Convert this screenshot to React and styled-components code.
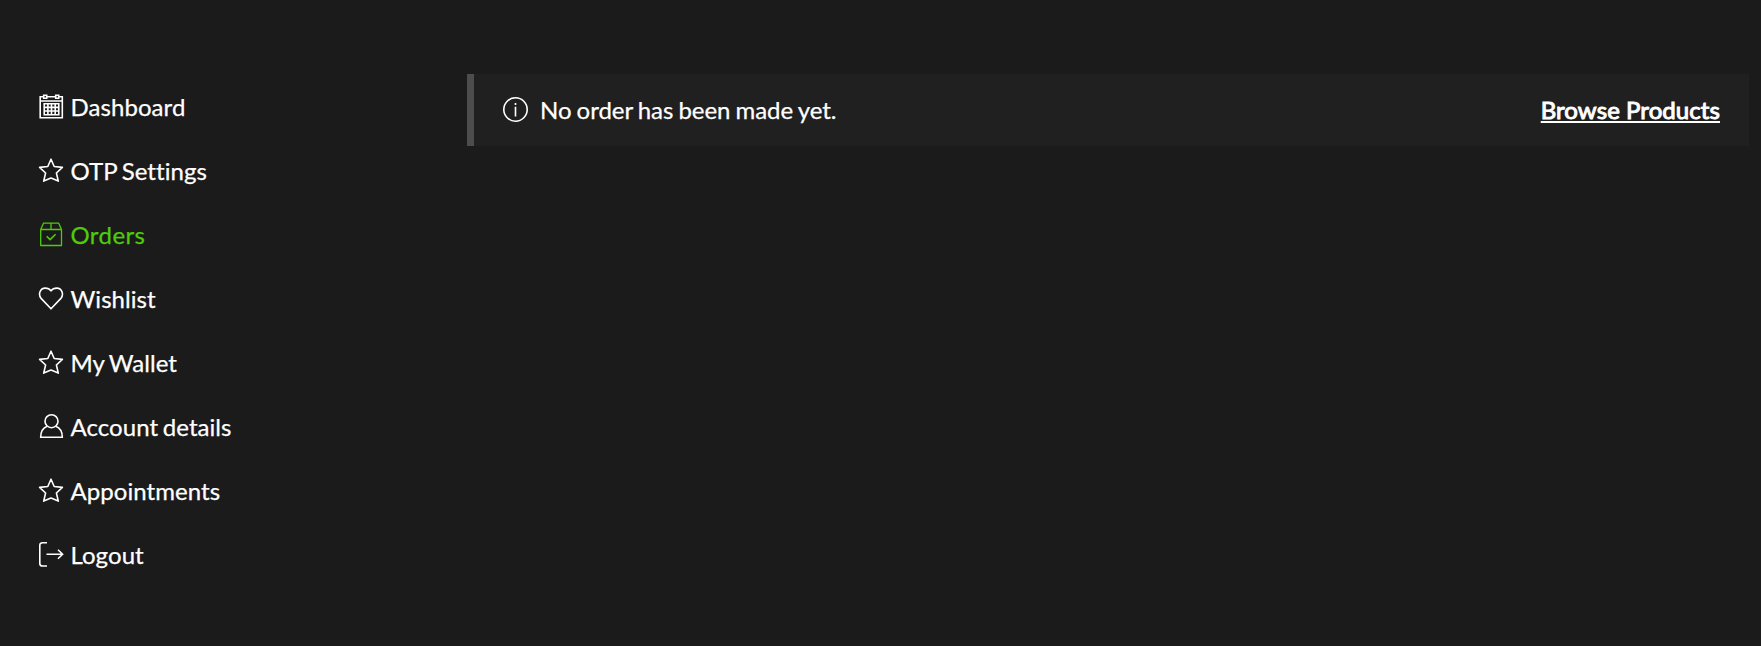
import React from "react";
import styled, { createGlobalStyle } from "styled-components";

const GlobalStyle = createGlobalStyle`
  body {
    margin: 0;
    background: #1b1b1b;
    color: #ffffff;
    font-family: Lato, "Liberation Sans", sans-serif;
    font-size: 24px;
    line-height: 40px;
    font-variant-ligatures: none;
    -webkit-text-stroke: 0.25px currentColor;
  }
`;

const Page = styled.div`
  display: flex;
  min-height: 646px;
  box-sizing: border-box;
  padding: 74px 12px 0 27px;
`;

const Sidebar = styled.nav`
  width: 440px;
  flex-shrink: 0;
`;

const Menu = styled.ul`
  list-style: none;
  margin: 0;
  padding: 0;
`;

const MenuLink = styled.a`
  display: flex;
  align-items: center;
  height: 64px;
  padding-left: 11px;
  color: ${(props) => (props.$active ? "#4fcb0c" : "#ffffff")};
  letter-spacing: ${(props) => (props.$active ? "0.4px" : "0.06px")};
  word-spacing: -1.6px;
  text-decoration: none;
`;

const MenuLabel = styled.span`
  margin: 2px 0 0 6.5px;
`;

const Icon = styled.svg`
  width: 26px;
  height: 26px;
  flex-shrink: 0;
  fill: none;
  stroke: currentColor;
  stroke-width: 1.6;
`;

const Content = styled.main`
  flex: 1;
`;

const Notice = styled.div`
  display: flex;
  align-items: center;
  height: 72px;
  box-sizing: border-box;
  padding: 0 29px 0 28px;
  background: #202020;
  border-left: 7px solid #4d4d4d;
`;

const NoticeText = styled.span`
  flex: 1;
  margin-left: 12px;
  letter-spacing: -0.04px;
  word-spacing: -1px;
`;

const NoticeLink = styled.a`
  color: #ffffff;
  letter-spacing: 0.07px;
  -webkit-text-stroke: 1px #ffffff;
  text-decoration: underline;
  text-decoration-thickness: 2px;
  text-underline-offset: 2px;
  text-decoration-skip-ink: none;
`;

const CalendarIcon = () => (
  <Icon viewBox="0 0 26 26">
    <path d="M5.5 3.7H2.2v21.1h22.1V3.7H21M9 3.7h8.5M2.2 8h22.1" />
    <path d="M5.7 2.2h3v3h-3zM17.7 2.2h3v3h-3z" />
    <path d="M6.2 10.7h14.6v11H6.2zM6.2 14.4h14.6M6.2 18h14.6M9.9 10.7v11M13.5 10.7v11M17.2 10.7v11" />
  </Icon>
);

const StarIcon = () => (
  <Icon viewBox="0 0 26 26" strokeLinejoin="round">
    <path d="M13 2.2l3.2 7.3 8.2.9-6 5.6 1.9 8.1L13 21.1l-7.3 3 1.9-8.1-6-5.6 8.2-.9z" />
  </Icon>
);

const OrdersIcon = () => (
  <Icon viewBox="0 0 26 26" strokeLinejoin="round">
    <path d="M2.7 8.5h20.8v16H2.7zM2.7 8.5l2.8-6.3h15.2l2.8 6.3M13 2.2v6.3" strokeWidth="1.3" />
    <path d="M8.7 15.2l3.4 3.4 5.5-5.4" />
  </Icon>
);

const HeartIcon = () => (
  <Icon viewBox="0 0 26 26" strokeLinejoin="round">
    <path d="M13 23.8L3.1 13.4C-.1 9.6 2 3.1 7.2 3.1c2.8 0 4.7 1.2 5.8 2.7 1.1-1.5 3-2.7 5.8-2.7 5.2 0 7.3 6.5 4.1 10.3z" />
  </Icon>
);

const UserIcon = () => (
  <Icon viewBox="0 0 26 26">
    <circle cx="13.5" cy="8.2" r="6.5" />
    <path d="M9.2 13.2c-4.2 1.6-6.5 5-6.5 11h21.6c0-6-2.3-9.4-6.5-11" />
  </Icon>
);

const LogoutIcon = () => (
  <Icon viewBox="0 0 26 26">
    <path d="M9 1.8H4.6c-1.8 0-2.8.8-2.8 2.6v18c0 1.8 1 2.6 2.8 2.6H9" />
    <path d="M8.5 13.3h16M20 8.8l4.6 4.5-4.6 4.5" />
  </Icon>
);

const InfoIcon = () => (
  <Icon viewBox="0 0 26 26">
    <circle cx="13.5" cy="12.5" r="11.7" />
    <path d="M13.5 9.7v9.8M13.5 6v2" />
  </Icon>
);

const items = [
  { label: "Dashboard", icon: CalendarIcon },
  { label: "OTP Settings", icon: StarIcon },
  { label: "Orders", icon: OrdersIcon, active: true },
  { label: "Wishlist", icon: HeartIcon },
  { label: "My Wallet", icon: StarIcon },
  { label: "Account details", icon: UserIcon },
  { label: "Appointments", icon: StarIcon },
  { label: "Logout", icon: LogoutIcon },
];

export default function App() {
  return (
    <>
      <GlobalStyle />
      <Page>
        <Sidebar>
          <Menu>
            {items.map(({ label, icon: ItemIcon, active }) => (
              <li key={label}>
                <MenuLink href="#" $active={active}>
                  <ItemIcon />
                  <MenuLabel>{label}</MenuLabel>
                </MenuLink>
              </li>
            ))}
          </Menu>
        </Sidebar>
        <Content>
          <Notice>
            <InfoIcon />
            <NoticeText>No order has been made yet.</NoticeText>
            <NoticeLink href="#">Browse Products</NoticeLink>
          </Notice>
        </Content>
      </Page>
    </>
  );
}
